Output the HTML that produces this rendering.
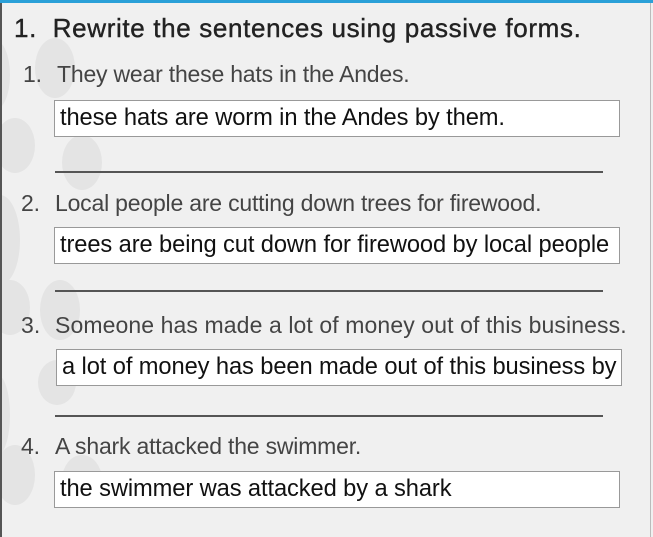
<!DOCTYPE html>
<html><head><style>
body{margin:0;width:653px;height:537px;overflow:hidden;background:#f0f0f0;position:relative;font-family:"Liberation Sans",sans-serif}
.frame{position:absolute;left:0;top:0;width:651px;height:537px;border-left:2px solid #555;border-right:1px solid #bbb;box-sizing:border-box}
.top{position:absolute;left:0;top:0;width:653px;height:3px;background:#2aa0d8}
.c{position:absolute;border-radius:50%;background:#e4e4e4}
.t{position:absolute;white-space:nowrap;color:#333}
.q{position:absolute;white-space:nowrap;color:#444;font-size:23px;letter-spacing:-0.2px}
.q span{position:absolute;left:-34px}
.box{position:absolute;left:54px;width:566px;height:37px;background:#fff;border:1px solid #999;box-sizing:border-box;font-size:23.7px;color:#111;padding:4px 0 0 5px;white-space:nowrap;overflow:hidden;letter-spacing:-0.1px}
.ln{position:absolute;left:55px;width:548px;height:2px;background:#555}
</style></head><body>
<div class="c" style="left:-20px;top:40px;width:30px;height:70px"></div>
<div class="c" style="left:35px;top:38px;width:40px;height:60px"></div>
<div class="c" style="left:-5px;top:118px;width:40px;height:55px"></div>
<div class="c" style="left:62px;top:135px;width:40px;height:55px"></div>
<div class="c" style="left:-20px;top:195px;width:40px;height:90px"></div>
<div class="c" style="left:40px;top:280px;width:40px;height:60px"></div>
<div class="c" style="left:-10px;top:280px;width:40px;height:55px"></div>
<div class="c" style="left:-15px;top:375px;width:25px;height:80px"></div>
<div class="c" style="left:38px;top:360px;width:38px;height:45px"></div>
<div class="c" style="left:-5px;top:445px;width:40px;height:60px"></div>
<div class="c" style="left:62px;top:455px;width:40px;height:50px"></div>
<div class="frame"></div>
<div class="top"></div>
<div class="t" style="left:14px;top:13px;font-size:26px;color:#222;letter-spacing:0.65px;-webkit-text-stroke:0.4px #222">1.&nbsp; Rewrite the sentences using passive forms.</div>
<div class="q" style="left:57px;top:61px"><span>1.</span>They wear these hats in the Andes.</div>
<div class="box" style="top:100px">these hats are worm in the Andes by them.</div>
<div class="ln" style="top:171px"></div>
<div class="q" style="left:55px;top:190px"><span>2.</span>Local people are cutting down trees for firewood.</div>
<div class="box" style="top:227px">trees are being cut down for firewood by local people</div>
<div class="ln" style="top:290px"></div>
<div class="q" style="left:55px;top:312px;letter-spacing:0.1px"><span>3.</span>Someone has made a lot of money out of this business.</div>
<div class="box" style="top:349px;left:56px">a lot of money has been made out of this business by</div>
<div class="ln" style="top:415px"></div>
<div class="q" style="left:55px;top:433px"><span>4.</span>A shark attacked the swimmer.</div>
<div class="box" style="top:471px">the swimmer was attacked by a shark</div>
</body></html>
